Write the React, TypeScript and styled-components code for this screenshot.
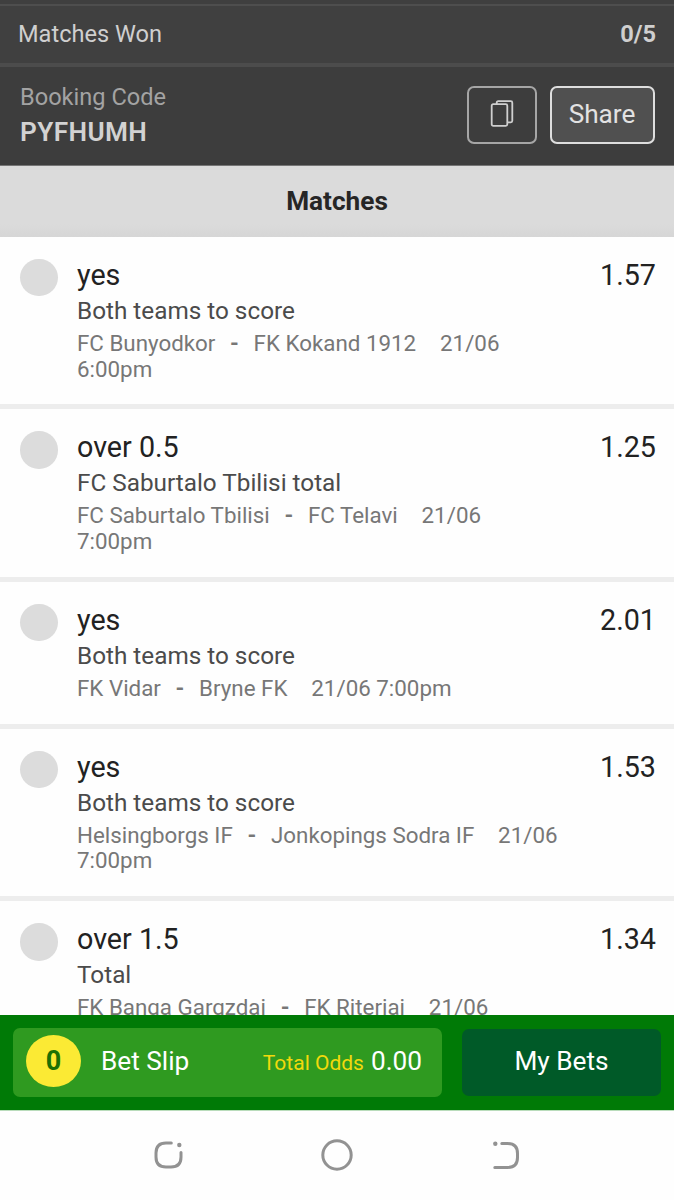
import React from 'react';
import styled, { createGlobalStyle } from 'styled-components';

const GlobalStyle = createGlobalStyle`
  * { box-sizing: border-box; }
  body { margin: 0; background: #fff; font-family: Roboto, "Liberation Sans", sans-serif; }
  button { font-family: inherit; margin: 0; padding: 0; }
`;

const Screen = styled.div`
  width: 674px;
  height: 1200px;
  display: flex;
  flex-direction: column;
  overflow: hidden;
  background: #fefefe;
`;

const TopStrip = styled.div`
  flex: none;
  height: 6px;
  background: #3f3f3f;
  border-bottom: 2px solid #4e4e4e;
`;

const WonRow = styled.div`
  flex: none;
  display: flex;
  justify-content: space-between;
  align-items: center;
  height: 61px;
  padding: 0 18px 1px 18px;
  background: #404040;
  border-bottom: 4px solid #4c4c4c;
  color: #cfcfcf;
  font-size: 23.6px;
`;

const WonCount = styled.span`
  font-weight: 700;
`;

const BookingRow = styled.div`
  flex: none;
  display: flex;
  justify-content: space-between;
  align-items: flex-start;
  height: 99px;
  padding: 19px 19px 0 20px;
  background: #3d3d3d;
  border-bottom: 1px solid #757575;
`;

const BookingLabel = styled.div`
  margin-top: -7px;
  color: #a3a3a3;
  font-size: 23.6px;
  line-height: 36px;
`;

const BookingCode = styled.div`
  color: #d2d2d2;
  font-size: 26.2px;
  font-weight: 600;
  line-height: 34px;
  letter-spacing: 0.4px;
`;

const Actions = styled.div`
  display: flex;
  gap: 13px;
`;

const ActionButton = styled.button<{ $filled?: boolean }>`
  display: flex;
  align-items: center;
  justify-content: center;
  width: ${(p) => (p.$filled ? 105 : 70)}px;
  height: 58px;
  padding: 0 1px 2px 0;
  border: 2px solid ${(p) => (p.$filled ? '#dedede' : '#a6a6a6')};
  border-radius: 7px;
  background: ${(p) => (p.$filled ? '#505050' : 'transparent')};
  color: #e2e2e2;
  font-size: 26.2px;
`;

const ListHeader = styled.div`
  flex: none;
  display: flex;
  align-items: center;
  justify-content: center;
  height: 71px;
  padding-bottom: 2px;
  background: linear-gradient(#dbdbdb 82%, #d6d6d6);
  color: #262626;
  font-size: 26.2px;
  font-weight: 700;
`;

const MatchList = styled.div`
  flex: 1;
  min-height: 0;
  overflow: hidden;
`;

const MatchRow = styled.div`
  display: flex;
  align-items: flex-start;
  padding: 19.8px 18px 22.1px 20px;
  border-bottom: 5px solid #ededed;
`;

const Status = styled.span`
  flex: none;
  width: 37.5px;
  height: 37.5px;
  margin: 2px 19.5px 0 0;
  border-radius: 50%;
  background: #dcdcdc;
`;

const MatchBody = styled.div`
  width: 483px;
`;

const Pick = styled.div`
  color: #222;
  font-size: 28.7px;
  line-height: 36px;
`;

const Market = styled.div`
  color: #4b4b4b;
  font-size: 24.3px;
  line-height: 36px;
`;

const Fixture = styled.div`
  margin-top: 2.2px;
  color: #777;
  font-size: 22.35px;
  line-height: 25.7px;
`;

const Dash = styled.b`
  margin: 0 14.7px;
  font-weight: 700;
`;

const Kickoff = styled.span`
  margin-left: 18.3px;
`;

const Odds = styled.div`
  margin-left: auto;
  color: #222;
  font-size: 28.7px;
  line-height: 36px;
`;

const SlipBar = styled.div`
  flex: none;
  display: flex;
  align-items: flex-start;
  gap: 20px;
  height: 96px;
  padding: 13px 13px 0;
  background: #007a06;
  border-bottom: 1px solid #b9dcbb;
`;

const SlipButton = styled.button`
  display: flex;
  align-items: center;
  width: 429px;
  height: 69px;
  padding: 0 20px 4px 13px;
  border: 0;
  border-radius: 7px;
  background: #2f9a20;
  color: #fff;
  font-size: 26.2px;
`;

const SlipCount = styled.span`
  display: flex;
  align-items: center;
  justify-content: center;
  width: 55px;
  height: 52px;
  margin-right: 20px;
  border-radius: 50%;
  background: #fbea34;
  color: #1c7003;
  font-size: 27px;
  font-weight: 700;
`;

const TotalLabel = styled.span`
  margin-left: auto;
  padding-top: 5px;
  color: #f1d90c;
  font-size: 21px;
`;

const TotalValue = styled.span`
  margin-left: 7px;
`;

const MyBets = styled.button`
  width: 199px;
  height: 67px;
  margin-top: 1px;
  padding-bottom: 3px;
  border: 0;
  border-radius: 7px;
  background: #005a28;
  color: #fff;
  font-size: 26.2px;
`;

const NavBar = styled.div`
  flex: none;
  display: flex;
  align-items: center;
  justify-content: space-between;
  height: 89px;
  padding: 0 152px 2px;
  svg { display: block; }
`;

const CopyIcon = () => (
  <svg width="24" height="28" viewBox="-0.5 0 24 28" fill="none" stroke="#cfcfcf" strokeWidth="1.8">
    <rect x="1.2" y="4.2" width="15.6" height="21.6" rx="1.5" />
    <path d="M6.2 4V2.7Q6.2 1.2 7.7 1.2H20.3Q21.8 1.2 21.8 2.7V20.8Q21.8 22.3 20.3 22.3H17" />
  </svg>
);

const RecentsIcon = () => (
  <svg width="34" height="34" viewBox="0 0 34 34" fill="none" stroke="#929292" strokeWidth="3" strokeLinecap="round">
    <path d="M19.3 5H14Q4 5 4 15V19Q4 29 14 29H19Q29 29 29 19V14.5" />
    <circle cx="27.3" cy="7" r="2.2" fill="#929292" stroke="none" />
  </svg>
);

const HomeIcon = () => (
  <svg width="34" height="34" viewBox="0 0 34 34" fill="none" stroke="#929292" strokeWidth="3">
    <circle cx="17" cy="17" r="14.2" />
  </svg>
);

const BackIcon = () => (
  <svg width="34" height="34" viewBox="0 0 34 34" fill="none" stroke="#929292" strokeWidth="3" strokeLinecap="round">
    <path d="M13.8 5.6H19.5Q29.5 5.6 29.5 15.6V19.4Q29.5 29.4 19.5 29.4H6.8" />
    <circle cx="7.3" cy="5.8" r="2.2" fill="#929292" stroke="none" />
  </svg>
);

const matches = [
  { pick: 'yes', market: 'Both teams to score', home: 'FC Bunyodkor', away: 'FK Kokand 1912', time: '21/06 6:00pm', odds: '1.57' },
  { pick: 'over 0.5', market: 'FC Saburtalo Tbilisi total', home: 'FC Saburtalo Tbilisi', away: 'FC Telavi', time: '21/06 7:00pm', odds: '1.25' },
  { pick: 'yes', market: 'Both teams to score', home: 'FK Vidar', away: 'Bryne FK', time: '21/06 7:00pm', odds: '2.01' },
  { pick: 'yes', market: 'Both teams to score', home: 'Helsingborgs IF', away: 'Jonkopings Sodra IF', time: '21/06 7:00pm', odds: '1.53' },
  { pick: 'over 1.5', market: 'Total', home: 'FK Banga Gargzdai', away: 'FK Riteriai', time: '21/06 7:00pm', odds: '1.34' },
];

export default function App() {
  return (
    <Screen>
      <GlobalStyle />
      <TopStrip />
      <WonRow>
        <span>Matches Won</span>
        <WonCount>0/5</WonCount>
      </WonRow>
      <BookingRow>
        <div>
          <BookingLabel>Booking Code</BookingLabel>
          <BookingCode>PYFHUMH</BookingCode>
        </div>
        <Actions>
          <ActionButton aria-label="Copy">
            <CopyIcon />
          </ActionButton>
          <ActionButton $filled>Share</ActionButton>
        </Actions>
      </BookingRow>
      <ListHeader>Matches</ListHeader>
      <MatchList>
        {matches.map((m) => (
          <MatchRow key={m.home}>
            <Status />
            <MatchBody>
              <Pick>{m.pick}</Pick>
              <Market>{m.market}</Market>
              <Fixture>
                {m.home}
                <Dash>-</Dash>
                {m.away} <Kickoff>{m.time}</Kickoff>
              </Fixture>
            </MatchBody>
            <Odds>{m.odds}</Odds>
          </MatchRow>
        ))}
      </MatchList>
      <SlipBar>
        <SlipButton>
          <SlipCount>0</SlipCount>
          <span>Bet Slip</span>
          <TotalLabel>Total Odds</TotalLabel>
          <TotalValue>0.00</TotalValue>
        </SlipButton>
        <MyBets>My Bets</MyBets>
      </SlipBar>
      <NavBar>
        <RecentsIcon />
        <HomeIcon />
        <BackIcon />
      </NavBar>
    </Screen>
  );
}
